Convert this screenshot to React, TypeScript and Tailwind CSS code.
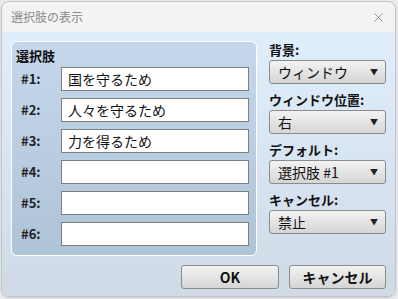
import { X } from 'lucide-react';

const choices = ['国を守るため', '人々を守るため', '力を得るため', '', '', ''];

const selects = [
  { label: '背景:', value: 'ウィンドウ' },
  { label: 'ウィンドウ位置:', value: '右' },
  { label: 'デフォルト:', value: '選択肢 #1' },
  { label: 'キャンセル:', value: '禁止' },
];

const font = { fontFamily: '"Noto Sans CJK JP", "Noto Sans", sans-serif' };

export default function App() {
  return (
    <div className="w-[398px] h-[299px] bg-[#ebebef] pt-px pl-px overflow-hidden" style={font}>
      <div className="w-[395px] h-[296px] rounded-[8px] border border-[#c4c4c4] overflow-hidden flex flex-col shadow-sm">
        {/* Title bar */}
        <div className="h-[30px] bg-[#f3f3f3] flex items-center justify-between pl-[9px] pr-[9px] shrink-0">
          <span className="text-[12px] text-[#8a8a8a]">選択肢の表示</span>
          <X className="w-[15px] h-[15px] text-[#777]" strokeWidth={1.2} />
        </div>

        {/* Body */}
        <div className="flex-1 bg-gradient-to-b from-[#e0eefc] to-[#cfdae6] px-[9px] pt-[9px]">
          <div className="flex">
            {/* Choices group */}
            <div className="w-[248px] h-[215px] rounded-[6px] border border-white bg-gradient-to-b from-[#c5d8eb] to-[#afc3d7] px-[4px] pt-[3px]">
              <div className="h-[22px] leading-[22px] text-[13px] font-bold text-[#111]">選択肢</div>
              <div className="flex flex-col gap-[7px]">
                {choices.map((c, i) => (
                  <div key={i} className="flex items-center h-[24px]">
                    <span className="w-[45px] pl-[5px] text-[13px] font-bold text-[#222]">#{i + 1}:</span>
                    <div className="w-[188px] h-[24px] bg-white border border-[#7f7f7f] pl-[6px] text-[14px] leading-[22px] text-[#111]">
                      {c}
                    </div>
                  </div>
                ))}
              </div>
            </div>

            {/* Right column */}
            <div className="ml-[12px] w-[118px] flex flex-col gap-[7px]">
              {selects.map((s) => (
                <div key={s.label}>
                  <div className="h-[19px] leading-[17px] text-[13px] font-bold text-[#111]">{s.label}</div>
                  <div className="h-[24px] rounded-[3px] border border-[#8c8c8c] bg-gradient-to-b from-[#f3f3f3] to-[#d5d5d5] flex items-center justify-between pl-[8px] pr-[7px]">
                    <span className="text-[14px] text-[#111]">{s.value}</span>
                    <span className="text-[8px] text-[#222]">▼</span>
                  </div>
                </div>
              ))}
            </div>
          </div>

          {/* Buttons */}
          <div className="flex justify-end gap-[10px] mt-[9px]">
            <button className="w-[98px] h-[24px] rounded-[3px] border border-[#8c8c8c] bg-gradient-to-b from-[#f3f3f3] to-[#d5d5d5] text-[14px] font-bold text-[#111]">
              OK
            </button>
            <button className="w-[97px] h-[24px] rounded-[3px] border border-[#8c8c8c] bg-gradient-to-b from-[#f3f3f3] to-[#d5d5d5] text-[14px] font-bold text-[#111]">
              キャンセル
            </button>
          </div>
        </div>
      </div>
    </div>
  );
}
